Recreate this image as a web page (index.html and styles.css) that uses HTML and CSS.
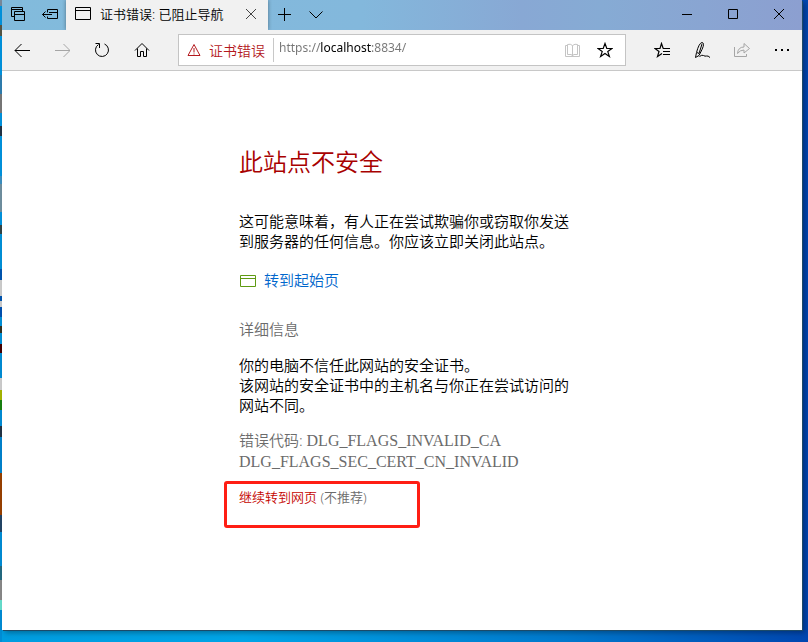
FILE: index.html
```html
<!DOCTYPE html>
<html lang="zh-CN">
    <head>
        <meta charset="UTF-8" />
        <meta name="viewport" content="width=device-width, initial-scale=1.0" />
        <title>证书错误: 已阻止导航</title>
        <link rel="stylesheet" href="styles.css">
    </head>
    <body>
        <div class="window">
            <!-- 标签栏 -->
            <header class="titlebar">
                <button class="tab-tool" aria-label="标签页">
                    <svg width="16" height="16" viewBox="0 0 16 16"><path d="M4.5 9.5H1.5V0.5H12.5V4.5M1.5 2.5H12.5M4.5 4.5H14.5V13.5H4.5ZM4.5 7.5H14.5" /></svg>
                </button>
                <button class="tab-tool" aria-label="搁置标签页">
                    <svg width="16" height="16" viewBox="0 0 16 16"><path d="M5.5 5.5V2.5H15.5V11.5H5.5V9.5M7 5.5H15.5M0.5 7.5H10M3.5 4.5L0.5 7.5L3.5 10.5" /></svg>
                </button>
                <div class="tab">
                    <svg width="16" height="14" viewBox="0 0 16 14"><path d="M0.5 0.5H15.5V12.5H0.5ZM0.5 3.5H15.5" /></svg>
                    <span class="tab-title">证书错误: 已阻止导航</span>
                    <button class="tab-close" aria-label="关闭标签页">
                        <svg width="12" height="12" viewBox="0 0 12 12"><path d="M1 1L11 11M11 1L1 11" /></svg>
                    </button>
                </div>
                <button class="tab-tool" aria-label="新建标签页">
                    <svg width="14" height="14" viewBox="0 0 14 14"><path d="M7.5 0V13M1 6.5H14" /></svg>
                </button>
                <button class="tab-tool" aria-label="标签页预览">
                    <svg width="14" height="8" viewBox="0 0 14 8"><path d="M0.5 0.5L7 7L13.5 0.5" /></svg>
                </button>
                <div class="window-buttons">
                    <button aria-label="最小化">
                        <svg width="12" height="12" viewBox="0 0 12 12"><path d="M1 5.5H11" /></svg>
                    </button>
                    <button aria-label="最大化">
                        <svg width="12" height="12" viewBox="0 0 12 12"><path d="M1.5 0.5H10.5V9.5H1.5Z" /></svg>
                    </button>
                    <button aria-label="关闭">
                        <svg width="12" height="12" viewBox="0 0 12 12"><path d="M1 0L11 10M11 0L1 10" /></svg>
                    </button>
                </div>
            </header>

            <!-- 工具栏 -->
            <nav class="toolbar">
                <button aria-label="后退">
                    <svg width="16" height="14" viewBox="0 0 16 14"><path d="M1 7.5H16M7.5 1L1 7.5L7.5 14" /></svg>
                </button>
                <button aria-label="前进" disabled>
                    <svg width="16" height="14" viewBox="0 0 16 14"><path d="M1 7.5H16M9.5 1L16 7.5L9.5 14" /></svg>
                </button>
                <button aria-label="刷新">
                    <svg width="16" height="16" viewBox="0 0 16 16"><path d="M4.5 2.5A6.5 6.5 0 1 0 10.5 2M5.5 6V1.5H1.5" /></svg>
                </button>
                <button aria-label="主页">
                    <svg width="16" height="16" viewBox="0 0 16 16"><path d="M1 8.5L8 1.5L15 8.5M3.5 6.5V14.5H6.5V9.5H9.5V14.5H12.5V6.5" /></svg>
                </button>
                <div class="address">
                    <button class="cert" type="button">
                        <svg width="14" height="14" viewBox="0 0 14 14"><path d="M7 1.5L13 12.5H1ZM7 5V9.5M7 10.5V11.5" /></svg>
                        证书错误
                    </button>
                    <input class="url" type="text" value="https://localhost:8834/" aria-label="地址" spellcheck="false" />
                    <button class="address-button book" aria-label="阅读视图" disabled>
                        <svg width="16" height="16" viewBox="0 0 16 16"><path d="M7.5 3.5Q5.5 1.5 2.5 2.5V12.5H6Q7 12.5 7.5 14M7.5 3.5Q10 1.5 12.5 2.5V12.5H9Q8 12.5 7.5 14V3.5M2.5 3.5H0.5V14.5H14.5V3.5H12.5" /></svg>
                    </button>
                    <button class="address-button" aria-label="收藏">
                        <svg width="16" height="16" viewBox="0 0 16 16"><path class="star" d="M8 1.5L9.8 6.5H15L10.8 9.6L12.4 14.5L8 11.5L3.6 14.5L5.2 9.6L1 6.5H6.2Z" /></svg>
                    </button>
                </div>
                <button aria-label="收藏夹">
                    <svg width="16" height="16" viewBox="0 0 16 16"><path class="star" d="M8 11.5L3.5 14.5L5 9.5L1 6.5H6L7.5 1.5L9.2 6.5" /><path d="M9 6.5H16M9 9.5H16M9 12.5H16" /></svg>
                </button>
                <button aria-label="添加笔记">
                    <svg width="18" height="18" viewBox="0 0 18 18"><path d="M2.5 16.5L3.5 11.5Q6 2 9 1.5Q12 2 9 8.5L6 14.5L2.5 16.5M4 11.5L6 12.5L9 3M6.5 15.5Q9 13.5 10.5 14.5T13.5 15T17 16.5" /></svg>
                </button>
                <button aria-label="共享" disabled>
                    <svg width="16" height="16" viewBox="0 0 16 16"><path d="M0.5 5V14.5H12.5V12M3.5 11.5Q4 5 10 5V1.5L15.5 6.5L10 11V8Q6 8 3.5 11.5Z" /></svg>
                </button>
                <button aria-label="更多">
                    <svg width="16" height="4" viewBox="0 0 16 4"><path class="dots" d="M1 1H3V3H1ZM7 1H9V3H7ZM13 1H15V3H13Z" /></svg>
                </button>
            </nav>

            <!-- 错误页 -->
            <main class="page">
                <div class="error">
                    <h1>此站点不安全</h1>
                    <p>这可能意味着，有人正在尝试欺骗你或窃取你发送到服务器的任何信息。你应该立即关闭此站点。</p>
                    <a class="start-link" href="#">
                        <svg width="18" height="14" viewBox="0 0 18 14"><path d="M1.5 2.5H16.5V13.5H1.5ZM1.5 5.5H16.5" /></svg>
                        转到起始页
                    </a>
                    <h2>详细信息</h2>
                    <p>你的电脑不信任此网站的安全证书。<br />该网站的安全证书中的主机名与你正在尝试访问的网站不同。</p>
                    <p class="code">错误代码: <span>DLG_FLAGS_INVALID_CA<br />DLG_FLAGS_SEC_CERT_CN_INVALID</span></p>
                    <p class="continue"><a href="#">继续转到网页</a> (不推荐)</p>
                </div>
            </main>
        </div>
    </body>
</html>
```
FILE: styles.css
```css
* {
    box-sizing: border-box;
}
body {
    display: flex;
    min-height: 100vh;
    margin: 0;
    padding: 0 6px 12px 2px;
    font-family: "Noto Sans", "Noto Sans CJK SC", sans-serif;
    font-weight: 350;
    /* 左侧露出的桌面图标 + 壁纸 */
    background:
        linear-gradient(
            #789 0 6px, #0092dd 6px 25px, #554 25px 36px, #0092dd 36px 75px,
            #2f7daf 75px 94px, #777 94px 113px, #0092dd 113px 126px, #234 126px 136px,
            #0092dd 136px 176px, #3c8fc0 176px 184px, #6f8f9f 184px 212px, #0092dd 212px 225px,
            #344 225px 234px, #0090d8 234px 269px, #0055b0 269px 280px, #ccc 280px 296px,
            #0055b0 296px 301px, #ccc 301px 307px, #0050b0 307px 317px, #0090d8 317px 326px,
            #332 326px 333px, #0090d8 333px 344px, #400 344px 353px, #008cd4 353px 378px,
            #ccc 378px 390px, #a5b500 390px 400px, #188010 400px 410px, #008cd4 410px 426px,
            #234 426px 437px, #0082cc 437px 473px, #984000 473px 515px, #246 515px 532px,
            #008cd4 532px 566px, #246a80 566px 580px, #888 580px 600px, #6dc 600px 610px,
            #008cd4 610px 642px) left top / 2px 642px no-repeat,
        linear-gradient(90deg, #009cdf, #00a4e6 30%, #0078cc 70%, #0046b0);
}
button {
    display: flex;
    align-items: center;
    justify-content: center;
    padding: 0;
    border: none;
    background: none;
    color: #000;
    font: inherit;
}
svg {
    flex: none;
    fill: none;
    stroke: currentColor;
}
a {
    text-decoration: none;
}
.window {
    display: flex;
    flex: 1;
    flex-direction: column;
    min-width: 0;
    background: #fff;
    box-shadow: 1px 1px 0 #1c4a68, 3px 3px 5px rgba(0, 0, 0, 0.3);
}

/* 标签栏 */
.titlebar {
    display: flex;
    height: 30px;
    background: linear-gradient(90deg, #82bbdc, #83b8dc 45%, #88a8d4 65%, #86abd4 75%, #8c9fd0);
}
.tab-tool {
    width: 32px;
}
.tab {
    display: flex;
    align-items: center;
    width: 202px;
    padding: 0 9px 2px;
    background: #f1f1f1;
    box-shadow: 0 0 4px rgba(0, 0, 0, 0.4);
    clip-path: inset(0 -4px);
}
.tab-title {
    flex: 1;
    margin-left: 9px;
    font-size: 13px;
    line-height: 20px;
    white-space: nowrap;
}
.tab-close {
    width: 16px;
    height: 16px;
    color: #444;
}
.window-buttons {
    display: flex;
    margin-left: auto;
}
.window-buttons button {
    width: 46px;
}

/* 工具栏 */
.toolbar {
    display: flex;
    height: 41px;
    border-bottom: 1px solid #c8c8c8;
    background: #f1f1f1;
}
.toolbar button {
    width: 40px;
}
.toolbar button:disabled {
    color: #a5a5a5;
}
.address {
    display: flex;
    flex: 1;
    align-items: center;
    min-width: 0;
    height: 32px;
    margin: 4px 16px 0;
    border: 1px solid #c4c4c4;
    background: #fff;
}
.toolbar .cert {
    gap: 8px;
    width: 95px;
    height: 24px;
    border-right: 1px solid #c8c8c8;
    color: #b4191d;
    font-size: 14px;
}
.url {
    flex: 1;
    min-width: 0;
    height: 24px;
    padding: 0 0 5px 5px;
    border: none;
    outline: none;
    /* 主机名用深色显示 */
    background: linear-gradient(90deg, #767676 46px, #000 46px 97px, #767676 97px);
    -webkit-background-clip: text;
    background-clip: text;
    color: transparent;
    font-family: "Noto Sans", sans-serif;
    font-size: 12px;
}
.toolbar .address-button {
    width: 32px;
}
.toolbar .book:disabled {
    color: #c4c4c4;
}
.address-button:last-child {
    margin-right: 4px;
}
.star {
    stroke-width: 1.2;
}
.dots {
    fill: currentColor;
    stroke: none;
}

/* 错误页 */
.page {
    flex: 1;
    padding: 75px 0 40px 4px;
}
.error {
    width: 330px;
    margin: 0 auto;
    color: #000;
    font-size: 15px;
    line-height: 20px;
}
.error p {
    margin: 0;
}
h1 {
    margin: 0 0 33px;
    color: #a80000;
    font-size: 24px;
    font-weight: 350;
    line-height: 32px;
}
.start-link {
    display: flex;
    align-items: center;
    gap: 7px;
    margin-top: 19px;
    color: #0066cc;
}
.start-link svg {
    color: #5f9a12;
}
h2 {
    margin: 29px 0 16px;
    color: #6b6b6b;
    font-size: 15px;
    font-weight: 350;
    line-height: 20px;
}
.error .code {
    margin-top: 15px;
    color: #6b6b6b;
}
.code span {
    font-family: "Liberation Serif", serif;
    font-size: 16px;
}
.error .continue {
    width: 196px;
    margin: 9px 0 0 -15px;
    padding: 3px 12px 18px;
    border: 3px solid #ff1e14;
    border-radius: 3px;
    color: #6b6b6b;
    font-size: 13px;
}
.continue a {
    color: #c50500;
}
```
